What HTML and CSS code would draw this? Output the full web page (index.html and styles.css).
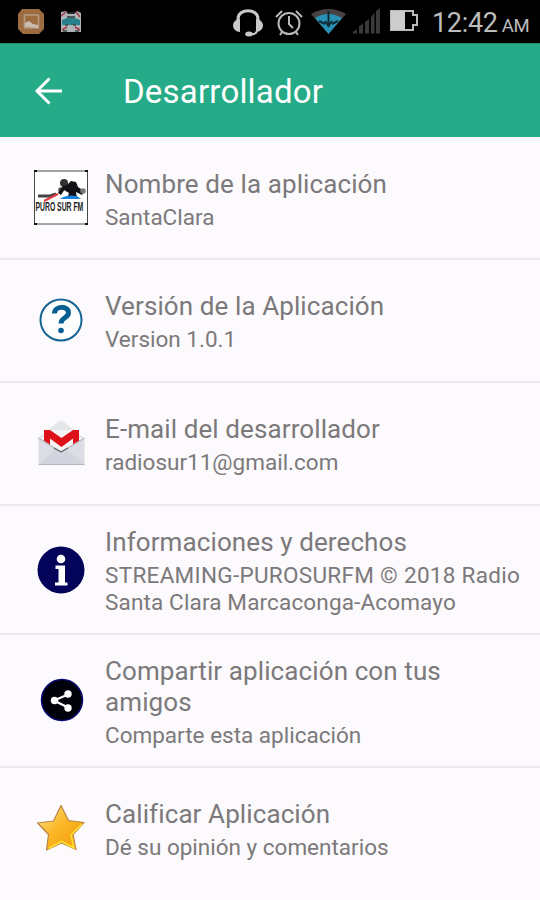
FILE: index.html
```
<!DOCTYPE html>
<html lang="es">
<head>
<meta charset="utf-8">
<title>Desarrollador</title>
<link rel="stylesheet" href="styles.css">
</head>
<body>
<div class="status">
  <svg class="notifications" width="90" height="43" viewBox="0 0 90 43">
    <path d="M22 9h17l5 5v15l-5 5H23l-5-5V14z" fill="#9c6b40"/>
    <path d="M24.500 15h14v13h-14z" fill="none" stroke="#b29a85" stroke-width="1.500"/>
    <path d="M25 27v-4l4-2 4 3 5 1v3z" fill="#c9bcae"/>
    <path d="M61 12l5-1 2 3h6l3-3 4 2v19H61z" fill="#aeb3b5"/>
    <path d="M61 16l5-4M76 12l4 5M62 30l5-3M80 30l-5-3" stroke="#a33c46" stroke-width="1.500"/>
    <path d="M68 13h7M67 17h8" stroke="#303638" stroke-width="1.500"/>
    <path d="M62 20l5-2h8l5 2v5H62z" fill="#27818d"/>
    <path d="M65 25h3M73 25h3M63 31h4M75 31h4" stroke="#444" stroke-width="1.500"/>
  </svg>
  <svg class="indicators" width="190" height="43" viewBox="230 0 190 43">
    <g fill="none" stroke="#c9c9c9">
      <path d="M238 21v-2c0-11 20-11 20 0v2" stroke-width="3"/>
      <path d="M257 30c0 3-2 4.500-7 4.500" stroke-width="2"/>
    </g>
    <path d="M240 19v13c-4 0-7-3-7-6.500s3-6.500 7-6.500zM256 19v13c4 0 7-3 7-6.500s-3-6.500-7-6.500z" fill="#c9c9c9"/>
    <ellipse cx="249" cy="34" rx="3.800" ry="2.500" fill="#c9c9c9"/>
    <g fill="none" stroke="#b9b9b9" stroke-width="2">
      <circle cx="289" cy="23.500" r="10.500"/>
      <path d="M289 16v8l4 4M276 17l6-6M302 17l-6-6M282 32l-2 3M296 32l2 3"/>
    </g>
    <path d="M311 14q17.500-10 35 0L328.500 34z" fill="#484242"/>
    <path d="M315 18q13.500-8 27 0L328.500 34z" fill="#2692b5"/>
    <path d="M328.500 11v16M325 21l3.500 5 3.500-5M319 21l6 3M338 21l-6 3" fill="none" stroke="#112c36" stroke-width="2"/>
    <path d="M353 33.500v-2l4-2v4zM359 33.500v-7l4-3v10zM365 33.500V22l4-3v14.500zM371 33.500V17l3.500-4v20.500zM376 33.500V11l4-3v25.500z" fill="#3c3939"/>
    <path d="M391 11h22v4h4v10h-4v5h-22z" fill="#000" stroke="#b9b9b9" stroke-width="2"/>
    <path d="M391 11h14v19h-14z" fill="#cdcdcd"/>
  </svg>
  <div class="clock">12:42<span class="ampm">AM</span></div>
</div>
<header class="bar">
  <svg width="28" height="28" viewBox="0 0 28 28" fill="none" stroke="#fff" stroke-width="2.900"><path d="M15.500 1.500L3 14l12.500 12.500M3 14h25"/></svg>
  <h1>Desarrollador</h1>
</header>
<main>
  <section class="row">
    <svg class="icon" viewBox="0 0 60 60">
      <path d="M4.500 3h53v53h-53z" fill="#fff" stroke="#49494b"/>
      <path d="M4 3h3M55 3h3M4 56h3M55 56h3" stroke="#111" stroke-width="2"/>
      <circle cx="34" cy="15" r="4" fill="#333"/><circle cx="31" cy="22" r="2.800" fill="#555"/>
      <path d="M37 17l4-4 5 1 2 5 6 4-2 4-6-3 1 6-10 1 2-6-5-3-3 5-3-2 5-7z" fill="#101114"/>
      <circle cx="53" cy="23" r="2.800" fill="#777"/>
      <path d="M8 28h12l6-2" stroke="#444" stroke-width="3" fill="none"/>
      <path d="M14 33l14-7" stroke="#e03a42" stroke-width="2"/>
      <path d="M30 31q6-5 17-3l4 3z" fill="#1680df"/>
      <text class="logo-text" transform="translate(5.500 43) scale(.57 1)">PURO SUR FM</text>
    </svg>
    <div class="text"><h2>Nombre de la aplicación</h2><p>SantaClara</p></div>
  </section>
  <section class="row">
    <svg class="icon" viewBox="0 0 60 60">
      <circle cx="31" cy="29" r="20.500" fill="#fff" stroke="#176494" stroke-width="2"/>
      <path d="M24.500 22.500c0-8 14-8 14-1 0 6-7.500 4.500-7.500 11" fill="none" stroke="#075f91" stroke-width="5"/>
      <circle cx="31" cy="39.500" r="2.800" fill="#075f91"/>
    </svg>
    <div class="text"><h2>Versión de la Aplicación</h2><p>Version 1.0.1</p></div>
  </section>
  <section class="row">
    <svg class="icon" viewBox="0 0 60 60">
      <path d="M8 24L28 8q3-2 6 0l20 16z" fill="#e4e7e9"/>
      <path d="M13 16h36v24H13z" fill="#f4f4f6"/>
      <path d="M14 33V16h6l11.500 8L43 16h6v17l-6 3V24.500L31.500 33 20 24.500V36z" fill="#df1118"/>
      <path d="M8.500 24L31 38l23.500-14v26h-46z" fill="#dcdde5"/>
      <path d="M8.500 50.500l16-14.500 6.500 4 6.500-4 17 14.500z" fill="#d3d4de"/>
      <path d="M8.500 24L31 38l23.500-14" fill="none" stroke="#b5b8bd" stroke-width="1.200"/>
      <path d="M24 34l7 4 7-4" fill="none" stroke="#626b6c" stroke-width="1.300"/>
      <path d="M8.500 50.500h46" stroke="#b5b5c0"/>
    </svg>
    <div class="text"><h2>E-mail del desarrollador</h2><p>radiosur11@gmail.com</p></div>
  </section>
  <section class="row tall">
    <svg class="icon" viewBox="0 0 60 60">
      <circle cx="31" cy="30" r="23.500" fill="#03035a"/>
      <circle cx="31" cy="19" r="4.300" fill="#fff"/>
      <path d="M25.500 25.500H35v17h2.500v3H25v-3h3.500V29h-3z" fill="#fff"/>
    </svg>
    <div class="text"><h2>Informaciones y derechos</h2><p><span class="wide">STREAMING-PUROSURFM © 2018 Radio</span><br><span class="medium">Santa Clara Marcaconga-Acomayo</span></p></div>
  </section>
  <section class="row taller">
    <svg class="icon" viewBox="0 0 60 60">
      <circle cx="32" cy="29" r="20.500" fill="#000008" stroke="#0b0b78" stroke-width="1.500"/>
      <path d="M38 23.500l-14 6 14 7" fill="none" stroke="#fff" stroke-width="2.300"/>
      <g fill="#fff"><circle cx="38" cy="23" r="3.700"/><circle cx="24.500" cy="29.500" r="3.700"/><circle cx="38" cy="37" r="3.700"/></g>
    </svg>
    <div class="text"><h2>Compartir aplicación con tus<br>amigos</h2><p>Comparte esta aplicación</p></div>
  </section>
  <section class="row last">
    <svg class="icon" viewBox="0 0 60 60">
      <defs><linearGradient id="gold" x1="0" y1="0" x2="1" y2="1"><stop offset="0" stop-color="#ffe28a"/><stop offset=".5" stop-color="#fbb524"/><stop offset=".8" stop-color="#f4a313"/><stop offset="1" stop-color="#ffd72b"/></linearGradient></defs>
      <path d="M31 6.500l7.500 15 15.500 2-11 12 3 15-14.500-6.500L16.500 51l2-15.500L7.500 24l16-2z" fill="url(#gold)" stroke="#b98545" stroke-width="1.200" stroke-linejoin="round"/>
      <path d="M52 25L41 36l3 13-12.500-6.500-13 7" fill="none" stroke="#ffdf32" stroke-width="1.600"/>
    </svg>
    <div class="text"><h2>Calificar Aplicación</h2><p>Dé su opinión y comentarios</p></div>
  </section>
</main>
</body>
</html>
```
FILE: styles.css
```
body {
  margin: 0;
  width: 540px;
  height: 900px;
  overflow: hidden;
  background: #fcfafc;
  font-family: Roboto, sans-serif;
  color: #7b797b;
}
svg { display: block; flex: none; }
.status {
  display: flex;
  height: 43px;
  background: #000;
  color: #bdbdbd;
}
.indicators { margin-left: 140px; }
.clock {
  padding: 6px 0 0 12px;
  font-size: 27px;
  line-height: 34px;
  letter-spacing: -0.3px;
  white-space: nowrap;
}
.ampm { margin-left: 4px; font-size: 18.500px; }
.bar {
  box-sizing: border-box;
  display: flex;
  align-items: center;
  gap: 61px;
  height: 94px;
  padding-left: 34px;
  background: #25ab87;
  border-top: 1px solid #21936f;
  color: #fff;
}
h1 { margin: 2px 0 0; font-size: 33px; font-weight: 400; line-height: 40px; letter-spacing: 0.2px; }
.row {
  box-sizing: border-box;
  display: flex;
  align-items: center;
  gap: 15px;
  height: 123px;
  padding-left: 30px;
  border-bottom: 2px solid #ebe9eb;
}
.row:first-child .text { padding-top: 5px; }
.tall { height: 129px; }
.taller { height: 133px; }
.last { height: 122px; border-bottom: 0; }
.icon { width: 60px; height: 60px; }
.text { padding-top: 3px; white-space: nowrap; }
.last .text { padding-top: 2px; }
h2 { margin: 0 0 4px; font-size: 26px; font-weight: 400; line-height: 31px; letter-spacing: 0.1px; }
p { margin: 0; font-size: 22.500px; line-height: 27px; }
.wide { letter-spacing: 0.3px; }
.medium { letter-spacing: 0.15px; }
.logo-text { font: 700 12px "Liberation Sans", sans-serif; fill: #222; }
```
